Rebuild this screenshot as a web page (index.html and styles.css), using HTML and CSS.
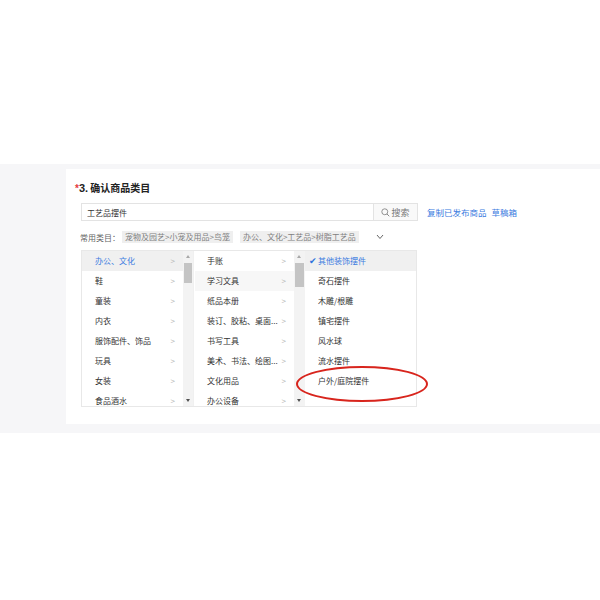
FILE: index.html
```html
<!DOCTYPE html>
<html lang="zh-CN">

<head>
  <meta charset="UTF-8">
  <meta name="viewport" content="width=device-width, initial-scale=1.0">
  <title>确认商品类目</title>
  <link rel="stylesheet" href="styles.css">
</head>

<body>
  <div class="band">
    <div class="card">
      <h3 class="title"><span class="star">*</span><b>3.</b> 确认商品类目</h3>

      <div class="search-row">
        <div class="search">
          <input class="search-input" type="text" value="工艺品摆件">
          <button class="search-btn">
            <svg width="9" height="9" viewBox="0 0 10 10"><circle cx="4.2" cy="4.2" r="3.3" fill="none" stroke="#888" stroke-width="1"/><path d="M6.6 6.6 L9.2 9.2" stroke="#888" stroke-width="1.1"/></svg>
            搜索
          </button>
        </div>
        <a class="link" href="#">复制已发布商品</a>
        <a class="link" href="#">草稿箱</a>
      </div>

      <div class="common">
        <span class="common-label">常用类目：</span>
        <span class="tag">宠物及园艺&gt;小宠及用品&gt;鸟笼</span>
        <span class="tag">办公、文化&gt;工艺品&gt;树脂工艺品</span>
        <svg class="more" width="8" height="6" viewBox="0 0 8 6"><path d="M1 1 L4 4.5 L7 1" fill="none" stroke="#666" stroke-width="1"/></svg>
      </div>

      <div class="picker">
        <div class="panel">
          <!-- 一级类目 -->
          <div class="col col1">
            <ul class="list">
              <li class="item active">办公、文化<i>&gt;</i></li>
              <li class="item">鞋<i>&gt;</i></li>
              <li class="item">童装<i>&gt;</i></li>
              <li class="item">内衣<i>&gt;</i></li>
              <li class="item">服饰配件、饰品<i>&gt;</i></li>
              <li class="item">玩具<i>&gt;</i></li>
              <li class="item">女装<i>&gt;</i></li>
              <li class="item">食品酒水<i>&gt;</i></li>
            </ul>
            <div class="bar">
              <span class="up"></span>
              <span class="thumb"></span>
              <span class="down"></span>
            </div>
          </div>
          <!-- 二级类目 -->
          <div class="col col2">
            <ul class="list">
              <li class="item">手账<i>&gt;</i></li>
              <li class="item hover">学习文具<i>&gt;</i></li>
              <li class="item">纸品本册<i>&gt;</i></li>
              <li class="item">装订、胶粘、桌面...<i>&gt;</i></li>
              <li class="item">书写工具<i>&gt;</i></li>
              <li class="item">美术、书法、绘图...<i>&gt;</i></li>
              <li class="item">文化用品<i>&gt;</i></li>
              <li class="item">办公设备<i>&gt;</i></li>
            </ul>
            <div class="bar">
              <span class="up"></span>
              <span class="thumb long"></span>
              <span class="down"></span>
            </div>
          </div>
          <!-- 三级类目 -->
          <div class="col col3">
            <ul class="list">
              <li class="item checked"><span class="check">✔</span>其他装饰摆件</li>
              <li class="item">奇石摆件</li>
              <li class="item">木雕/根雕</li>
              <li class="item">镇宅摆件</li>
              <li class="item">风水球</li>
              <li class="item">流水摆件</li>
              <li class="item">户外/庭院摆件</li>
            </ul>
          </div>
        </div>
        <div class="circle"></div>
      </div>
    </div>
  </div>
</body>

</html>
```

FILE: styles.css
```css
* {
  margin: 0;
  padding: 0;
  list-style: none;
  box-sizing: border-box;
}

body {
  background: #fff;
  font-family: "Noto Sans CJK SC", "Noto Sans", sans-serif;
  font-size: 8px;
  color: #333;
}

.band {
  margin-top: 164px;
  height: 269px;
  background: #f6f6f8;
  padding: 5px 0 0 66px;
}

.card {
  height: 255px;
  background: #fff;
  padding: 10px 0 0 9px;
}

.title {
  font-size: 10px;
  font-weight: bold;
  color: #222;
  line-height: 18px;
  font-family: "Noto Sans CJK SC", serif;
}

.title b {
  font-family: "Liberation Sans", sans-serif;
  font-size: 11px;
}

.star {
  color: #e4393c;
  font-family: "Liberation Sans", sans-serif;
  font-size: 10px;
}

/* 搜索 */
.search-row {
  display: flex;
  align-items: center;
  margin: 5px 0 0 6px;
}

.search {
  display: flex;
  height: 18px;
  border: 1px solid #e3e3e3;
}

.search-input {
  width: 291px;
  border: none;
  outline: none;
  padding-left: 5px;
  font-family: inherit;
  font-size: 8px;
  color: #333;
}

.search-btn {
  width: 44px;
  border: none;
  border-left: 1px solid #e3e3e3;
  background: #f9f9f9;
  color: #777;
  font-family: inherit;
  font-size: 9px;
  display: flex;
  align-items: center;
  justify-content: center;
  gap: 1px;
}

.link {
  color: #3b7be0;
  text-decoration: none;
  margin-left: 9px;
  font-size: 8.5px;
}

.link + .link {
  margin-left: 5px;
}

/* 常用类目 */
.common {
  display: flex;
  align-items: center;
  margin: 10px 0 0 5px;
  height: 12px;
  color: #666;
}

.tag {
  background: #efefef;
  color: #808080;
  padding: 0 3px;
  line-height: 12px;
  margin-left: 2px;
  margin-right: 5px;
}

.more {
  margin-left: 12px;
}

/* 类目选择 */
.picker {
  position: relative;
  margin: 7px 0 0 6px;
}

.panel {
  display: flex;
  width: 336px;
  height: 157px;
  border: 1px solid #e8e8e8;
  overflow: hidden;
}

.col {
  display: flex;
}

.col1 {
  border-right: 1px solid #f0f0f0;
  margin-right: 1px;
}

.col1 .list {
  width: 101px;
}

.col2 .list {
  width: 99px;
}

.col3 .list {
  width: 111px;
}

.item {
  height: 20px;
  line-height: 20px;
  padding-left: 13px;
  padding-right: 8px;
  display: flex;
  justify-content: space-between;
  white-space: nowrap;
}

.col2 .item {
  padding-left: 12px;
}

.col3 .item {
  padding-left: 13px;
}

.item i {
  font-style: normal;
  color: #b5b5b5;
  font-size: 8px;
}

.item.active {
  background: #f0f0f0;
  color: #3b7be0;
}

.item.hover {
  background: #f7f7f7;
}

.item.checked {
  background: #f0f0f0;
  color: #3b7be0;
  padding-left: 4px;
  justify-content: flex-start;
}

.check {
  font-size: 9px;
  width: 9px;
  color: #2f74dc;
}

/* 滚动条 */
.bar {
  width: 10px;
  height: 155px;
  background: #f3f3f3;
  position: relative;
}

.col2 .bar {
  width: 11px;
}

.up,
.down {
  position: absolute;
  left: 50%;
  margin-left: -2.5px;
  width: 0;
  height: 0;
  border-left: 2.5px solid transparent;
  border-right: 2.5px solid transparent;
}

.up {
  top: 4px;
  border-bottom: 3px solid #a8a8a8;
}

.down {
  bottom: 4px;
  border-top: 3px solid #505050;
}

.thumb {
  position: absolute;
  left: 1px;
  right: 1px;
  top: 12px;
  height: 20px;
  background: #c4c4c4;
}

.thumb.long {
  height: 24px;
}

/* 标注红圈 */
.circle {
  position: absolute;
  left: 215px;
  top: 116px;
  width: 132px;
  height: 36px;
  border: 2px solid #d8251d;
  border-radius: 50%;
}
```
